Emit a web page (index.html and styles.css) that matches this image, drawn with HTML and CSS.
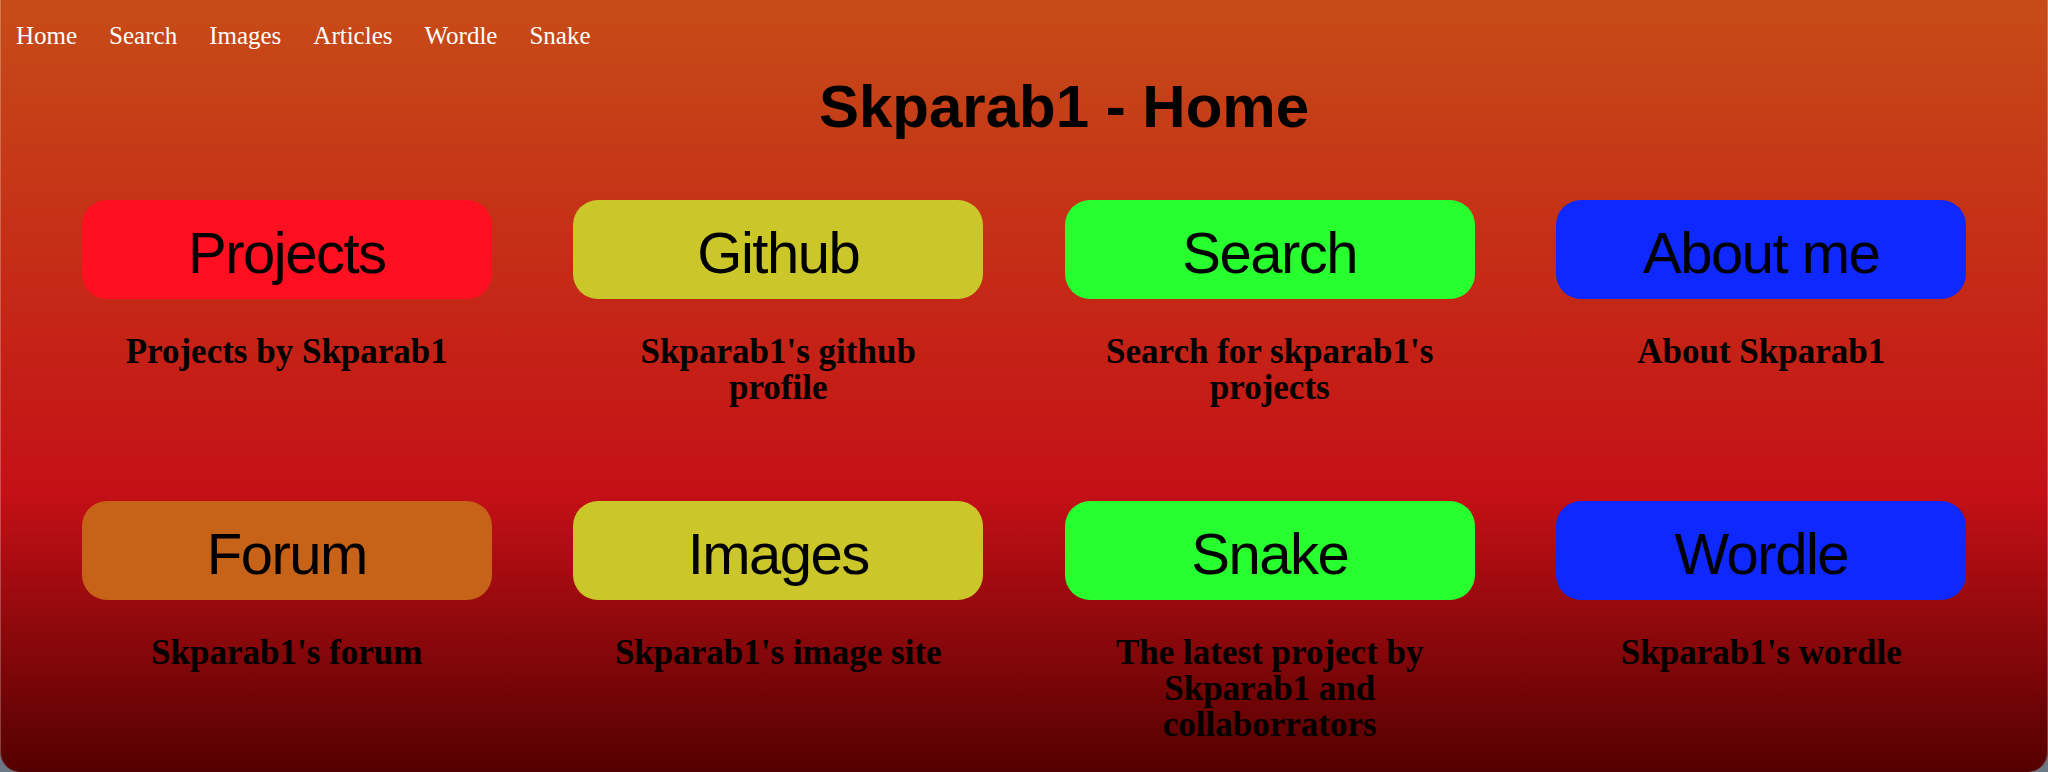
FILE: index.html
```html
<!DOCTYPE html>
<html lang="en">
<head>
<meta charset="utf-8">
<title>Skparab1 - Home</title>
<link rel="stylesheet" href="styles.css">
</head>
<body>
<div class="window">
  <nav class="nav">
    <a href="#">Home</a>
    <a href="#">Search</a>
    <a href="#">Images</a>
    <a href="#">Articles</a>
    <a href="#">Wordle</a>
    <a href="#">Snake</a>
  </nav>
  <h1 class="title">Skparab1 - Home</h1>
  <main class="grid">
    <div class="cell">
      <a class="btn red" href="#">Projects</a>
      <h2 class="desc">Projects by Skparab1</h2>
    </div>
    <div class="cell">
      <a class="btn yellow" href="#">Github</a>
      <h2 class="desc">Skparab1's github profile</h2>
    </div>
    <div class="cell">
      <a class="btn green" href="#">Search</a>
      <h2 class="desc">Search for skparab1's projects</h2>
    </div>
    <div class="cell">
      <a class="btn blue" href="#">About me</a>
      <h2 class="desc">About Skparab1</h2>
    </div>
    <div class="cell">
      <a class="btn orange" href="#">Forum</a>
      <h2 class="desc">Skparab1's forum</h2>
    </div>
    <div class="cell">
      <a class="btn yellow" href="#">Images</a>
      <h2 class="desc">Skparab1's image site</h2>
    </div>
    <div class="cell">
      <a class="btn green" href="#">Snake</a>
      <h2 class="desc">The latest project by Skparab1 and collaborrators</h2>
    </div>
    <div class="cell">
      <a class="btn blue" href="#">Wordle</a>
      <h2 class="desc">Skparab1's wordle</h2>
    </div>
  </main>
</div>
</body>
</html>
```
FILE: styles.css
```css
html {
  margin: 0;
  padding: 0;
  background: #6d7886;
}

body {
  margin: 0;
  padding: 0;
}

.window {
  height: 772px;
  box-sizing: border-box;
  overflow: hidden;
  border-radius: 0 0 20px 20px;
  background: linear-gradient(to bottom, #c64c17 0%, #c41016 64%, #540000 100%);
  box-shadow: inset 1px 0 0 rgba(255, 255, 255, 0.25), inset -1px 0 0 rgba(255, 255, 255, 0.25);
  font-family: "Liberation Serif", "Times New Roman", serif;
  color: #000;
}

.nav {
  display: flex;
  gap: 32px;
  padding: 21px 0 0 16px;
  height: 29px;
  font-size: 25px;
  line-height: 29px;
}

.nav a {
  color: #fff;
  text-decoration: none;
}

.title {
  margin: 22px 0 0 0;
  padding-left: 80px;
  height: 70px;
  line-height: 70px;
  text-align: center;
  font-family: "Liberation Sans", Arial, sans-serif;
  font-weight: bold;
  font-size: 60px;
}

.grid {
  display: grid;
  grid-template-columns: repeat(4, 410px);
  column-gap: 81.5px;
  row-gap: 95px;
  justify-content: center;
  margin-top: 58px;
}

.cell {
  display: flex;
  flex-direction: column;
  align-items: center;
}

.btn {
  width: 410px;
  height: 99px;
  box-sizing: border-box;
  padding-top: 6px;
  border-radius: 25px;
  display: flex;
  align-items: center;
  justify-content: center;
  font-family: "Liberation Sans", Arial, sans-serif;
  font-size: 58px;
  letter-spacing: -1.5px;
  color: #000;
  text-decoration: none;
}

.red { background: #ff0f1f; }
.yellow { background: #cbc62a; }
.green { background: #27ff2f; }
.blue { background: #0f28ff; }
.orange { background: #c66319; }

.desc {
  width: 350px;
  margin: 35px 0 0 0;
  font-size: 35px;
  line-height: 36px;
  font-weight: bold;
  text-align: center;
}
```
